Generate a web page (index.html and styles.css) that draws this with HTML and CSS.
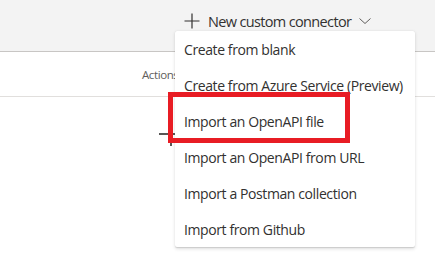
FILE: index.html
```html
<!DOCTYPE html>
<html>
<head>
<meta charset="utf-8">
<link rel="stylesheet" href="styles.css">
</head>
<body>
<div class="page">
  <header class="topbar">
    <button class="new-btn">
      <svg class="plus-icon" width="16" height="16" viewBox="0 0 16 16"><path d="M8 0.5V15.5M0.5 8H15.5" stroke="#323130" stroke-width="1.2" fill="none"/></svg>
      <span class="new-label">New custom connector</span>
      <svg class="chev" width="12" height="6" viewBox="0 0 12 6"><path d="M0.5 0.5L6 5.5L11.5 0.5" stroke="#605e5c" stroke-width="1" fill="none"/></svg>
    </button>
  </header>
  <div class="colrow">
    <span class="col-actions">Actions</span>
  </div>
  <div class="content">
    <svg class="big-plus" width="24" height="24" viewBox="0 0 24 24"><path d="M12 0V24M0 12H24" stroke="#201f1e" stroke-width="1.5" fill="none"/></svg>
  </div>

  <ul class="menu">
    <li class="item">Create from blank</li>
    <li class="item">Create from Azure Service (Preview)</li>
    <li class="item">Import an OpenAPI file</li>
    <li class="item">Import an OpenAPI from URL</li>
    <li class="item">Import a Postman collection</li>
    <li class="item">Import from Github</li>
  </ul>
  <div class="highlight"></div>
</div>
</body>
</html>
```
FILE: styles.css
```css
html, body {
  margin: 0;
  padding: 0;
  background: #ffffff;
}
.page {
  position: relative;
  width: 435px;
  height: 273px;
  overflow: hidden;
  font-family: "Open Sans", "Noto Sans", sans-serif;
  color: #323130;
}
.topbar {
  height: 51px;
  background: #f3f3f3;
  border-bottom: 1px solid #c8c6c4;
  display: flex;
  align-items: flex-start;
}
.new-btn {
  margin: 11px 0 0 184px;
  padding: 0;
  border: 0;
  background: transparent;
  display: flex;
  align-items: center;
  font-family: inherit;
  font-size: 14.5px;
  letter-spacing: -0.65px;
  color: #323130;
  height: 20px;
}
.plus-icon { display: block; }
.new-label { margin-left: 8px; }
.chev { margin-left: 8px; display: block; }
.colrow {
  height: 44px;
  border-bottom: 1px solid #e1dfdd;
  display: flex;
  align-items: center;
  padding-left: 142px;
}
.col-actions {
  font-size: 11.5px;
  letter-spacing: -0.4px;
  color: #605e5c;
}
.content {
  padding: 25px 0 0 159px;
}
.big-plus { display: block; }
.menu {
  position: absolute;
  left: 175px;
  top: 31px;
  width: 240px;
  margin: 0;
  padding: 0;
  list-style: none;
  background: #ffffff;
  box-shadow: 0 1.6px 3.6px rgba(0,0,0,0.13), 0 0.3px 0.9px rgba(0,0,0,0.11);
  border-radius: 2px;
}
.item {
  height: 36px;
  line-height: 37px;
  padding-left: 9px;
  font-size: 14px;
  letter-spacing: -0.4px;
  white-space: nowrap;
}
.highlight {
  position: absolute;
  left: 168px;
  top: 92px;
  width: 172px;
  height: 41px;
  border: 5px solid #e81c24;
}
```
